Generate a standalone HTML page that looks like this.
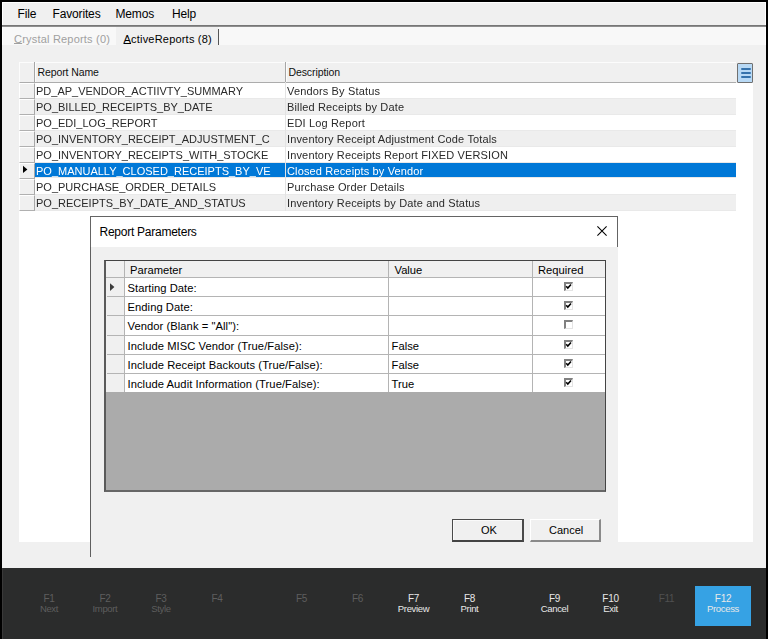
<!DOCTYPE html>
<html><head><meta charset="utf-8">
<style>
*{margin:0;padding:0;box-sizing:border-box}
html,body{width:768px;height:639px;overflow:hidden;background:#000}
body{position:relative;font-family:"Liberation Sans",sans-serif;color:#000}
.a{position:absolute}
.t{position:absolute;white-space:nowrap;line-height:1}
#app{left:2px;top:2px;width:764px;height:637px;background:#f0f0f0}
/* menu */
#menu{left:2px;top:2px;width:764px;height:23px;background:#f0f0f0;border-top:1px solid #fff;border-left:1px solid #fff;border-right:1px solid #fff}
.mi{font-size:12px;letter-spacing:-0.15px;color:#000}
#mline{left:2px;top:25px;width:764px;height:2px;background:linear-gradient(#6a6a6a,#9a9a9a)}
#tabs{left:2px;top:27px;width:764px;height:18px;background:#f8f8f8;border-left:1px solid #fff;border-right:1px solid #fff}
#tabact{left:116px;top:27px;width:102px;height:18px;background:#f0f0f0}
#tabsep{left:218px;top:29px;width:1px;height:16px;background:#555}
.tt{font-size:11px;letter-spacing:0.2px}
/* grid */
#grid{left:19px;top:83px;width:734px;height:459px;background:#fff}
#ghdr{left:19px;top:62px;width:717px;height:21px;background:#f0f0f0;border-top:1px solid #fcfcfc;border-left:1px solid #fcfcfc;border-bottom:1px solid #acacac}
.hv{top:62px;width:1px;height:20px;background:#a6a6a6;box-shadow:1px 0 0 #fcfcfc}
.gh{font-size:10.5px;top:67px;color:#111;letter-spacing:-0.1px}
#gbtn{left:737px;top:63px;width:16px;height:20px;background:#b8d9f5;border:1px solid #707070;border-radius:1px}
#gbtn i{position:absolute;left:3px;width:10px;height:2px;background:#3572ac;border-radius:1px}
.gr{left:19px;width:717px;height:16px}
.gr.alt .c1,.gr.alt .c2{background:#efefef;box-shadow:inset 0 1px 0 #e9e9e9,inset 0 -1px 0 #e9e9e9}
.rh{left:0;top:0;width:16px;height:16px;background:#f0f0f0;border-top:1px solid #fff;border-left:1px solid #fff;border-bottom:1px solid #b0b0b0;border-right:1px solid #a8a8a8}
.c1{left:16px;top:-1px;width:251px;height:17px;overflow:hidden;border-right:1px solid #e3e3e3}
.c2{left:267px;top:-1px;width:450px;height:17px;overflow:hidden}
.cell{font-size:11px;color:#2a2a2a;top:4px;left:1px;will-change:transform}
.c2 .cell{left:1px;letter-spacing:0.15px}
.gr.sel .c1,.gr.sel .c2{background:#0078d7;height:16px}
.gr.sel .cell{color:#fff}
.tri{left:3.5px;top:3px;width:0;height:0;border-top:3.5px solid transparent;border-bottom:3.5px solid transparent;border-left:4.5px solid #000}

#dlg{left:90px;top:216px;width:528px;height:341px;background:#f0f0f0;border-left:1px solid #5f5f5f}
#dlgtitle{left:90px;top:216px;width:528px;height:31px;background:#fff;border:1px solid #646464;border-bottom:none}
.dtitle{font-size:12px;letter-spacing:-0.25px}
#pgrid{left:104px;top:260px;width:502px;height:232px;background:#ababab;border:1px solid #444;border-width:1px 1px 2px 2px;border-bottom-color:#666;border-left-color:#5a5a5a}
.pr{left:107px;width:497px;height:19px;background:#fff}
.prh{left:0;top:0;width:18px;height:100%;background:#f0f0f0;border-right:1px solid #a0a0a0}
.pc{top:0;height:100%;border-right:1px solid #a0a0a0;border-bottom:1px solid #a0a0a0;overflow:hidden}
.pt{font-size:11.2px;letter-spacing:0.06px}
.ph{font-size:11.2px}
.ptri{width:0;height:0;border-top:3.5px solid transparent;border-bottom:3.5px solid transparent;border-left:4px solid #3a3a3a}
.cbx{width:9px;height:9px;background:#fff;border-top:2px solid #808080;border-left:2px solid #808080;border-right:1px solid #e4e4e4;border-bottom:1px solid #e4e4e4}
.btn{top:519px;height:23px;background:#f0f0f0}
#okb{left:452px;width:72px;border:1px solid #4a4a4a;border-bottom:2px solid #444;border-right:2px solid #4a4a4a;box-shadow:inset 1px 1px 0 #fafafa}
#cnb{left:530px;width:71px;border-top:1px solid #fff;border-left:1px solid #fff;border-right:2px solid #8a8a8a;border-bottom:2px solid #8a8a8a}
.bt{font-size:11px}
#foot{left:2px;top:568px;width:764px;height:71px;background:#2b2c2c;border-left:1px solid #3a3a3a}
.fk{font-size:9.5px;color:#5e5e5e;text-align:center;width:56px;letter-spacing:-0.35px}
.fk.en{color:#e8e8e8}
.fkey{font-size:10px;letter-spacing:-0.3px}
.fk.dim{color:#505050}
#f12{left:695px;top:586px;width:56px;height:40px;background:#36a2e4}
</style></head>
<body>
<div id="app" class="a"></div>
<div id="menu" class="a"></div>
<div class="t mi" style="left:17.5px;top:8px">File</div>
<div class="t mi" style="left:52.5px;top:8px">Favorites</div>
<div class="t mi" style="left:115.5px;top:8px">Memos</div>
<div class="t mi" style="left:172px;top:8px">Help</div>
<div id="mline" class="a"></div>
<div id="tabs" class="a"></div>
<div id="tabact" class="a"></div>
<div id="tabsep" class="a"></div>
<div class="t tt" style="left:14px;top:34px;color:#a0a0a0"><span style="text-decoration:underline;text-underline-offset:0px">C</span>rystal Reports (0)</div>
<div class="t tt" style="left:123.5px;top:34px;color:#000"><span style="text-decoration:underline;text-underline-offset:0px">A</span>ctiveReports (8)</div>

<div id="grid" class="a"></div>
<div id="ghdr" class="a"></div>
<div class="a hv" style="left:34px"></div>
<div class="a hv" style="left:285px"></div>
<div class="t gh" style="left:37.5px">Report Name</div>
<div class="t gh" style="left:288.5px">Description</div>
<div id="gbtn" class="a"><i style="top:4px"></i><i style="top:8px"></i><i style="top:12px"></i></div>
<div class="a gr" style="top:83px">
<div class="rh a"></div>
<div class="c1 a"><span class="t cell">PD_AP_VENDOR_ACTIIVTY_SUMMARY</span></div><div class="c2 a"><span class="t cell">Vendors By Status</span></div></div>
<div class="a gr alt" style="top:99px">
<div class="rh a"></div>
<div class="c1 a"><span class="t cell">PO_BILLED_RECEIPTS_BY_DATE</span></div><div class="c2 a"><span class="t cell">Billed Receipts by Date</span></div></div>
<div class="a gr" style="top:115px">
<div class="rh a"></div>
<div class="c1 a"><span class="t cell">PO_EDI_LOG_REPORT</span></div><div class="c2 a"><span class="t cell">EDI Log Report</span></div></div>
<div class="a gr alt" style="top:131px">
<div class="rh a"></div>
<div class="c1 a"><span class="t cell">PO_INVENTORY_RECEIPT_ADJUSTMENT_C</span></div><div class="c2 a"><span class="t cell">Inventory Receipt Adjustment Code Totals</span></div></div>
<div class="a gr" style="top:147px">
<div class="rh a"></div>
<div class="c1 a"><span class="t cell">PO_INVENTORY_RECEIPTS_WITH_STOCKE</span></div><div class="c2 a"><span class="t cell">Inventory Receipts Report FIXED VERSION</span></div></div>
<div class="a gr alt sel" style="top:163px">
<div class="rh a"></div><svg class="a" style="left:3px;top:2px" width="6" height="9" viewBox="0 0 6 9"><path d="M1 0.8L5.4 4.4L1 8Z" fill="#000"/></svg>
<div class="c1 a"><span class="t cell">PO_MANUALLY_CLOSED_RECEIPTS_BY_VE</span></div><div class="c2 a"><span class="t cell">Closed Receipts by Vendor</span></div></div>
<div class="a gr" style="top:179px">
<div class="rh a"></div>
<div class="c1 a"><span class="t cell">PO_PURCHASE_ORDER_DETAILS</span></div><div class="c2 a"><span class="t cell">Purchase Order Details</span></div></div>
<div class="a gr alt" style="top:195px">
<div class="rh a"></div>
<div class="c1 a"><span class="t cell">PO_RECEIPTS_BY_DATE_AND_STATUS</span></div><div class="c2 a"><span class="t cell">Inventory Receipts by Date and Status</span></div></div>

<!-- dialog -->
<div id="dlg" class="a"></div>
<div id="dlgtitle" class="a"></div>
<div class="t dtitle" style="left:99.5px;top:226px">Report Parameters</div>
<svg class="a" style="left:597px;top:226px" width="10" height="10" viewBox="0 0 10 10"><path d="M0.4 0.4L9.6 9.6M9.6 0.4L0.4 9.6" stroke="#000" stroke-width="1.05" fill="none"/></svg>
<div id="pgrid" class="a"></div>
<div class="a" style="left:106px;top:261px;width:499px;height:17px;background:#f0f0f0;border-bottom:1px solid #b4b4b4"></div>
<div class="a" style="left:124px;top:261px;width:1px;height:131px;background:#b4b4b4"></div>
<div class="a" style="left:388px;top:261px;width:1px;height:131px;background:#b4b4b4"></div>
<div class="a" style="left:532px;top:261px;width:1px;height:131px;background:#b4b4b4"></div>
<div class="t ph" style="left:130px;top:265px">Parameter</div>
<div class="t ph" style="left:394.5px;top:265px">Value</div>
<div class="t ph" style="left:538px;top:265px">Required</div>
<div class="a" style="left:106px;top:278px;width:499px;height:19px;background:#fff"></div>
<div class="a" style="left:106px;top:278px;width:18px;height:19px;background:#f0f0f0"></div>
<div class="a" style="left:107px;top:296px;width:498px;height:1px;background:#b4b4b4"></div>
<div class="a" style="left:124px;top:278px;width:1px;height:19px;background:#b4b4b4"></div>
<div class="a" style="left:388px;top:278px;width:1px;height:19px;background:#b4b4b4"></div>
<div class="a" style="left:532px;top:278px;width:1px;height:19px;background:#b4b4b4"></div>
<div class="t pt" style="left:127.5px;top:283.0px">Starting Date:</div>
<div class="a cbx" style="left:564px;top:282px"><svg width="9" height="9" viewBox="0 0 9 9" style="position:absolute;left:-2px;top:-2px"><path d="M2.2 4.3L3.8 6 7 2.5" stroke="#000" stroke-width="1.6" fill="none"/></svg></div>
<svg class="a" style="left:109px;top:282px" width="7" height="10" viewBox="0 0 7 10"><path d="M1 1.3L5.4 5.1L1 8.9Z" fill="#3c3c3c"/></svg>
<div class="a" style="left:106px;top:297px;width:499px;height:19px;background:#fff"></div>
<div class="a" style="left:106px;top:297px;width:18px;height:19px;background:#f0f0f0"></div>
<div class="a" style="left:107px;top:315px;width:498px;height:1px;background:#b4b4b4"></div>
<div class="a" style="left:124px;top:297px;width:1px;height:19px;background:#b4b4b4"></div>
<div class="a" style="left:388px;top:297px;width:1px;height:19px;background:#b4b4b4"></div>
<div class="a" style="left:532px;top:297px;width:1px;height:19px;background:#b4b4b4"></div>
<div class="t pt" style="left:127.5px;top:302.2px">Ending Date:</div>
<div class="a cbx" style="left:564px;top:301px"><svg width="9" height="9" viewBox="0 0 9 9" style="position:absolute;left:-2px;top:-2px"><path d="M2.2 4.3L3.8 6 7 2.5" stroke="#000" stroke-width="1.6" fill="none"/></svg></div>
<div class="a" style="left:106px;top:316px;width:499px;height:20px;background:#fff"></div>
<div class="a" style="left:106px;top:316px;width:18px;height:20px;background:#f0f0f0"></div>
<div class="a" style="left:107px;top:335px;width:498px;height:1px;background:#b4b4b4"></div>
<div class="a" style="left:124px;top:316px;width:1px;height:20px;background:#b4b4b4"></div>
<div class="a" style="left:388px;top:316px;width:1px;height:20px;background:#b4b4b4"></div>
<div class="a" style="left:532px;top:316px;width:1px;height:20px;background:#b4b4b4"></div>
<div class="t pt" style="left:127.5px;top:321.4px">Vendor (Blank = "All"):</div>
<div class="a cbx" style="left:564px;top:320px"></div>
<div class="a" style="left:106px;top:336px;width:499px;height:19px;background:#fff"></div>
<div class="a" style="left:106px;top:336px;width:18px;height:19px;background:#f0f0f0"></div>
<div class="a" style="left:107px;top:354px;width:498px;height:1px;background:#b4b4b4"></div>
<div class="a" style="left:124px;top:336px;width:1px;height:19px;background:#b4b4b4"></div>
<div class="a" style="left:388px;top:336px;width:1px;height:19px;background:#b4b4b4"></div>
<div class="a" style="left:532px;top:336px;width:1px;height:19px;background:#b4b4b4"></div>
<div class="t pt" style="left:127.5px;top:340.6px">Include MISC Vendor (True/False):</div>
<div class="t pt" style="left:391.5px;top:340.6px">False</div>
<div class="a cbx" style="left:564px;top:340px"><svg width="9" height="9" viewBox="0 0 9 9" style="position:absolute;left:-2px;top:-2px"><path d="M2.2 4.3L3.8 6 7 2.5" stroke="#000" stroke-width="1.6" fill="none"/></svg></div>
<div class="a" style="left:106px;top:355px;width:499px;height:19px;background:#fff"></div>
<div class="a" style="left:106px;top:355px;width:18px;height:19px;background:#f0f0f0"></div>
<div class="a" style="left:107px;top:373px;width:498px;height:1px;background:#b4b4b4"></div>
<div class="a" style="left:124px;top:355px;width:1px;height:19px;background:#b4b4b4"></div>
<div class="a" style="left:388px;top:355px;width:1px;height:19px;background:#b4b4b4"></div>
<div class="a" style="left:532px;top:355px;width:1px;height:19px;background:#b4b4b4"></div>
<div class="t pt" style="left:127.5px;top:359.8px">Include Receipt Backouts (True/False):</div>
<div class="t pt" style="left:391.5px;top:359.8px">False</div>
<div class="a cbx" style="left:564px;top:359px"><svg width="9" height="9" viewBox="0 0 9 9" style="position:absolute;left:-2px;top:-2px"><path d="M2.2 4.3L3.8 6 7 2.5" stroke="#000" stroke-width="1.6" fill="none"/></svg></div>
<div class="a" style="left:106px;top:374px;width:499px;height:18px;background:#fff"></div>
<div class="a" style="left:106px;top:374px;width:18px;height:18px;background:#f0f0f0"></div>
<div class="a" style="left:124px;top:374px;width:1px;height:18px;background:#b4b4b4"></div>
<div class="a" style="left:388px;top:374px;width:1px;height:18px;background:#b4b4b4"></div>
<div class="a" style="left:532px;top:374px;width:1px;height:18px;background:#b4b4b4"></div>
<div class="t pt" style="left:127.5px;top:379.0px">Include Audit Information (True/False):</div>
<div class="t pt" style="left:391.5px;top:379.0px">True</div>
<div class="a cbx" style="left:564px;top:378px"><svg width="9" height="9" viewBox="0 0 9 9" style="position:absolute;left:-2px;top:-2px"><path d="M2.2 4.3L3.8 6 7 2.5" stroke="#000" stroke-width="1.6" fill="none"/></svg></div>
<div id="okb" class="a btn"><span class="t bt" style="left:28px;top:5px">OK</span></div>
<div id="cnb" class="a btn"><span class="t bt" style="left:18px;top:5px">Cancel</span></div>
<!-- footer -->
<div id="foot" class="a"></div>
<div id="f12" class="a"></div>
<div class="t fk fkey " style="left:21px;top:594px">F1</div>
<div class="t fk " style="left:21px;top:604px">Next</div>
<div class="t fk fkey " style="left:77px;top:594px">F2</div>
<div class="t fk " style="left:77px;top:604px">Import</div>
<div class="t fk fkey " style="left:133px;top:594px">F3</div>
<div class="t fk " style="left:133px;top:604px">Style</div>
<div class="t fk fkey " style="left:189px;top:594px">F4</div>
<div class="t fk fkey " style="left:273.5px;top:594px">F5</div>
<div class="t fk fkey " style="left:329.5px;top:594px">F6</div>
<div class="t fk fkey en" style="left:385.5px;top:594px">F7</div>
<div class="t fk en" style="left:385.5px;top:604px">Preview</div>
<div class="t fk fkey en" style="left:441.5px;top:594px">F8</div>
<div class="t fk en" style="left:441.5px;top:604px">Print</div>
<div class="t fk fkey en" style="left:526.5px;top:594px">F9</div>
<div class="t fk en" style="left:526.5px;top:604px">Cancel</div>
<div class="t fk fkey en" style="left:582.5px;top:594px">F10</div>
<div class="t fk en" style="left:582.5px;top:604px">Exit</div>
<div class="t fk fkey dim" style="left:638.5px;top:594px">F11</div>
<div class="t fk fkey en" style="left:695px;top:594px">F12</div>
<div class="t fk en" style="left:695px;top:604px">Process</div>
</body></html>
